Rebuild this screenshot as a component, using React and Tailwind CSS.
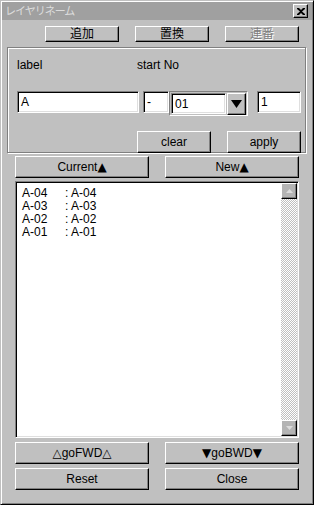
import React from "react";

const font = "font-['Liberation_Sans','Noto_Sans_CJK_JP',sans-serif]";

function Btn({ children, className = "", disabled }) {
  return (
    <div
      className={`flex items-center justify-center bg-[#c0c0c0] border border-t-white border-l-white border-r-black border-b-black shadow-[inset_-1px_-1px_#808080] text-[12px] leading-none ${
        disabled ? "text-[#808080] [text-shadow:1px_1px_0_#fff]" : "text-black"
      } ${className}`}
    >
      {children}
    </div>
  );
}

function Tri({ children }) {
  return <span className="font-['DejaVu_Sans',sans-serif] text-[12px] leading-none">{children}</span>;
}

function Field({ children, className = "" }) {
  return (
    <div
      className={`flex items-center bg-white border border-t-[#808080] border-l-[#808080] border-r-white border-b-white shadow-[inset_1px_1px_#000,inset_-1px_-1px_#dfdfdf] text-[12px] leading-none text-black ${className}`}
    >
      {children}
    </div>
  );
}

function ScrollBtn({ down }) {
  return (
    <div className="w-[16px] h-[16px] flex items-center justify-center bg-[#b4b4b4] border border-t-white border-l-white border-r-black border-b-black shadow-[inset_-1px_-1px_#808080]">
      <svg width="7" height="4" viewBox="0 0 7 4">
        <polygon points={down ? "0,0 7,0 3.5,4" : "3.5,0 7,4 0,4"} fill="#dcdcdc" />
      </svg>
    </div>
  );
}

const rows = ["A-04", "A-03", "A-02", "A-01"];

export default function App() {
  return (
    <div
      className={`${font} w-[314px] h-[505px] flex flex-col bg-[#c0c0c0] border border-t-[#c0c0c0] border-l-[#c0c0c0] border-r-black border-b-black shadow-[inset_1px_1px_#fff,inset_-1px_-1px_#808080] p-[1px]`}
    >
      {/* title bar */}
      <div className="h-[18px] flex items-center justify-between bg-[#a0a0a0] pl-[3px] pr-[4px]">
        <span className="text-[11px] tracking-[-1px] text-[#dcdcdc] leading-none">レイヤリネーム</span>
        <div className="w-[15px] h-[14px] flex items-center justify-center bg-[#c0c0c0] border border-t-white border-l-white border-r-black border-b-black shadow-[inset_-1px_-1px_#808080]">
          <svg width="8" height="7" viewBox="0 0 8 7">
            <path d="M0 0h2l2 2 2-2h2v1L5 3.5 8 6v1H6L4 5 2 7H0V6l3-2.5L0 1z" fill="#000" />
          </svg>
        </div>
      </div>

      {/* mode buttons */}
      <div className="mt-[6px] h-[16px] flex pl-[43px] gap-[16px]">
        <Btn className="w-[74px] h-[16px]">追加</Btn>
        <Btn className="w-[74px] h-[16px]">置換</Btn>
        <Btn className="w-[74px] h-[16px]" disabled>連番</Btn>
      </div>

      {/* group box */}
      <div className="mt-[5px] ml-[5px] w-[299px] h-[106px] border border-[#808080] shadow-[inset_1px_1px_#fff,1px_1px_#fff] flex flex-col">
        <div className="mt-[10px] flex text-[12px] leading-[14px] text-black">
          <span className="ml-[9px] w-[120px]">label</span>
          <span>start No</span>
        </div>
        <div className="mt-[19px] flex items-start">
          <Field className="ml-[9px] w-[122px] h-[22px] pl-[3px]">A</Field>
          <Field className="ml-[4px] w-[26px] h-[22px] pl-[3px]">-</Field>
          <div className="w-[79px] h-[25px] flex items-start border border-t-[#808080] border-l-[#808080] border-r-white border-b-white p-[1px]">
            <Field className="w-[56px] h-[21px] pl-[3px] pt-[1px]">01</Field>
            <div className="ml-[1px] w-[19px] h-[22px] flex items-center justify-center bg-[#c0c0c0] border border-t-white border-l-white border-r-black border-b-black shadow-[inset_-1px_-1px_#808080]">
              <svg width="11" height="8" viewBox="0 0 11 8">
                <polygon points="0,0 11,0 5.5,8" fill="#000" />
              </svg>
            </div>
          </div>
          <Field className="ml-[9px] w-[44px] h-[22px] pl-[3px]">1</Field>
        </div>
        <div className="mt-[15px] flex">
          <Btn className="ml-[129px] w-[74px] h-[22px]">clear</Btn>
          <Btn className="ml-[16px] w-[74px] h-[22px]">apply</Btn>
        </div>
      </div>

      {/* sort buttons */}
      <div className="mt-[3px] ml-[13px] flex gap-[16px]">
        <Btn className="w-[134px] h-[22px]">Current<Tri>▲</Tri></Btn>
        <Btn className="w-[134px] h-[22px]">New<Tri>▲</Tri></Btn>
      </div>

      {/* list */}
      <div className="mt-[3px] ml-[13px] w-[284px] h-[257px] flex bg-white border border-t-[#808080] border-l-[#808080] border-r-white border-b-white shadow-[inset_1px_1px_#000,inset_-1px_-1px_#dfdfdf] p-[1px]">
        <div className="flex-1 pl-[5px] pt-[4px] text-[12px] leading-[13px] text-black">
          {rows.map((r) => (
            <div key={r} className="flex">
              <span className="w-[43px]">{r}</span>
              <span>: {r}</span>
            </div>
          ))}
        </div>
        <div className="w-[16px] flex flex-col">
          <ScrollBtn />
          <div className="flex-1 bg-[repeating-conic-gradient(#c0c0c0_0_25%,#ffffff_0_50%)] bg-[length:2px_2px]" />
          <ScrollBtn down />
        </div>
      </div>

      {/* navigation */}
      <div className="mt-[4px] ml-[13px] flex gap-[16px]">
        <Btn className="w-[134px] h-[22px]"><Tri>△</Tri>goFWD<Tri>△</Tri></Btn>
        <Btn className="w-[134px] h-[22px]"><Tri>▼</Tri>goBWD<Tri>▼</Tri></Btn>
      </div>
      <div className="mt-[4px] ml-[13px] flex gap-[16px]">
        <Btn className="w-[134px] h-[22px]">Reset</Btn>
        <Btn className="w-[134px] h-[22px]">Close</Btn>
      </div>
    </div>
  );
}
